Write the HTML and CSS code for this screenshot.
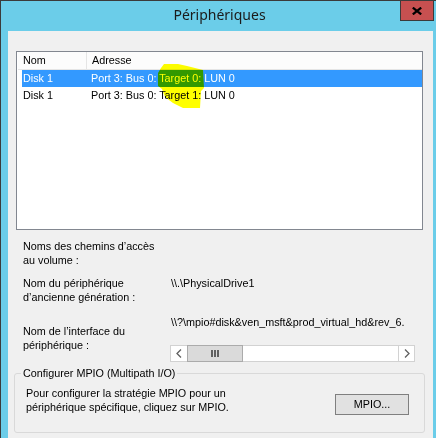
FILE: index.html
```html
<!DOCTYPE html>
<html lang="fr">
<head>
<meta charset="utf-8">
<title>Périphériques</title>
<link rel="stylesheet" href="styles.css">
</head>
<body>
<div class="window">
  <div class="titlebar">
    <span class="tb-spacer"></span>
    <span class="title">Périphériques</span>
    <span class="tb-controls">
      <span class="close-btn">
        <svg width="10" height="8" viewBox="0 0 10 8"><path d="M0.8 0.6 L9.2 7.4 M9.2 0.6 L0.8 7.4" stroke="#000" stroke-width="2.2" fill="none"/></svg>
      </span>
    </span>
  </div>
  <div class="client">
    <div class="listbox">
      <div class="lv-header">
        <div class="hcol hcol-name">Nom</div>
        <div class="hcol hcol-addr">Adresse</div>
      </div>
      <div class="lv-row selected">
        <span class="col-name">Disk 1</span>
        <span class="col-addr">Port 3: Bus 0: Target 0: LUN 0</span>
      </div>
      <div class="lv-row">
        <span class="col-name">Disk 1</span>
        <span class="col-addr">Port 3: Bus 0: Target 1: LUN 0</span>
      </div>
      <svg class="marker" width="60" height="60" viewBox="0 0 60 60">
        <polygon points="7,12 21,12 30,14 38,16 46,18 47,36 44,39 43,56 26,56 16,51 8,45 5,37 1,34 1,21 4,16" fill="#ffff00"/>
      </svg>
    </div>

    <div class="props">
      <div class="prop">
        <div class="prop-label">Noms des chemins d’accès<br>au volume :</div>
        <div class="prop-value"></div>
      </div>
      <div class="prop">
        <div class="prop-label">Nom du périphérique<br>d’ancienne génération :</div>
        <div class="prop-value">\\.\PhysicalDrive1</div>
      </div>
      <div class="prop prop-iface">
        <div class="prop-label label-iface">Nom de l’interface du<br>périphérique :</div>
        <div class="iface-box">
          <div class="iface-text">\\?\mpio#disk&amp;ven_msft&amp;prod_virtual_hd&amp;rev_6.</div>
          <div class="hscroll">
            <span class="sb-btn">
              <svg width="6" height="9" viewBox="0 0 6 9"><polyline points="5,0.5 1,4.5 5,8.5" fill="none" stroke="#606060" stroke-width="1.3"/></svg>
            </span>
            <span class="sb-thumb"><span class="grip"></span><span class="grip"></span><span class="grip"></span></span>
            <span class="sb-track"></span>
            <span class="sb-btn sb-btn-right">
              <svg width="6" height="9" viewBox="0 0 6 9"><polyline points="1,0.5 5,4.5 1,8.5" fill="none" stroke="#606060" stroke-width="1.3"/></svg>
            </span>
          </div>
        </div>
      </div>
    </div>

    <fieldset class="group">
      <legend>Configurer MPIO (Multipath I/O)</legend>
      <div class="group-body">
        <p class="group-text">Pour configurer la stratégie MPIO pour un<br>périphérique spécifique, cliquez sur MPIO.</p>
        <button class="btn" type="button">MPIO...</button>
      </div>
    </fieldset>
  </div>
</div>
</body>
</html>
```

FILE: styles.css
```css
* { box-sizing: border-box; }

html, body {
  margin: 0;
  padding: 0;
  background: #6bcde9;
}

body {
  font-family: "Liberation Sans", Arial, sans-serif;
  font-size: 10.8px;
  color: #000;
}

.window {
  width: 436px;
  height: 438px;
  background: #6bcde9;
  border-top: 1px solid #3b3b3b;
  border-left: 1px solid #3b3b3b;
  display: flex;
  flex-direction: column;
  overflow: hidden;
}

/* Title bar */
.titlebar {
  height: 30px;
  flex: none;
  display: grid;
  grid-template-columns: 1fr auto 1fr;
  align-items: start;
}

.title {
  font-family: "Noto Sans", "Open Sans", sans-serif;
  font-size: 14px;
  line-height: 27px;
  color: #1b1b1b;
  padding-left: 2px;
}

.tb-controls {
  display: flex;
  justify-content: flex-end;
  padding-right: 2px;
}

.close-btn {
  width: 34px;
  height: 21px;
  margin-top: -1px;
  background: #c75050;
  border: 1px solid #3b3b3b;
  display: flex;
  align-items: center;
  justify-content: center;
  padding-top: 1px;
}

.close-btn svg { display: block; }

/* Client area */
.client {
  flex: 1;
  width: 425px;
  margin-left: 7px;
  background: #f0f0f0;
  display: flex;
  flex-direction: column;
  align-items: flex-start;
}

/* List view */
.listbox {
  position: relative;
  margin: 20px 0 0 8px;
  width: 407px;
  height: 179px;
  border: 1px solid #828790;
  background: #fff;
  flex: none;
}

.lv-header {
  display: flex;
  height: 18px;
  margin-left: 1px;
  background: #fcfcfc;
  border-bottom: 1px solid #e5e5e5;
  line-height: 17px;
}

.hcol-name {
  width: 69px;
  padding-left: 5px;
  border-right: 1px solid #e5e5e5;
}

.hcol-addr {
  padding-left: 5px;
}

.lv-row {
  display: flex;
  height: 17px;
  line-height: 17px;
  margin-left: 5px;
  white-space: nowrap;
}

.lv-row.selected {
  background: #3399ff;
  color: #fff;
}

.col-name {
  width: 69px;
  padding-left: 1px;
}

/* hand-drawn highlighter stroke on top of the list */
.marker {
  position: absolute;
  left: 140px;
  top: 0;
  mix-blend-mode: multiply;
  pointer-events: none;
}

/* Properties */
.props {
  padding-left: 15px;
  width: 100%;
}

.prop {
  display: grid;
  grid-template-columns: 147px 1fr;
  margin-top: 9px;
  line-height: 14px;
}

.prop-value {
  padding-left: 1px;
  white-space: nowrap;
}

.prop-iface {
  margin-top: 11px;
}

.label-iface {
  margin-top: 9px;
}

.iface-box {
  width: 245px;
}

.iface-text {
  padding-left: 1px;
  white-space: nowrap;
  overflow: hidden;
  height: 14px;
}

.hscroll {
  display: flex;
  margin-top: 16px;
  height: 17px;
  border: 1px solid #d2d2d2;
  background: #fff;
}

.sb-btn {
  width: 16px;
  display: flex;
  align-items: center;
  justify-content: center;
  flex: none;
}

.sb-btn-right {
  border-left: 1px solid #d2d2d2;
}

.sb-thumb {
  width: 56px;
  margin: -1px 0;
  background: #dadada;
  border: 1px solid #ababab;
  display: flex;
  align-items: center;
  justify-content: center;
  gap: 1px;
  flex: none;
}

.grip {
  width: 2px;
  height: 7px;
  background: #606060;
}

.sb-track {
  flex: 1;
}

/* Group box */
.group {
  margin: 4px 0 0 6px;
  width: 411px;
  padding: 0 15px 17px 6px;
  border: 1px solid #d9d9d9;
  border-radius: 3px;
  min-width: 0;
}

.group legend {
  padding: 0 2px;
  line-height: 14px;
}

.group-body {
  display: flex;
  justify-content: space-between;
  align-items: flex-start;
  padding: 6px 0 0 5px;
}

.group-text {
  margin: 0;
  line-height: 14px;
}

.btn {
  margin-top: 8px;
  width: 74px;
  height: 21px;
  padding: 0;
  background: #e1e1e1;
  border: 1px solid #7f7f7f;
  border-radius: 0;
  font: inherit;
  color: #000;
  line-height: 19px;
}
```
